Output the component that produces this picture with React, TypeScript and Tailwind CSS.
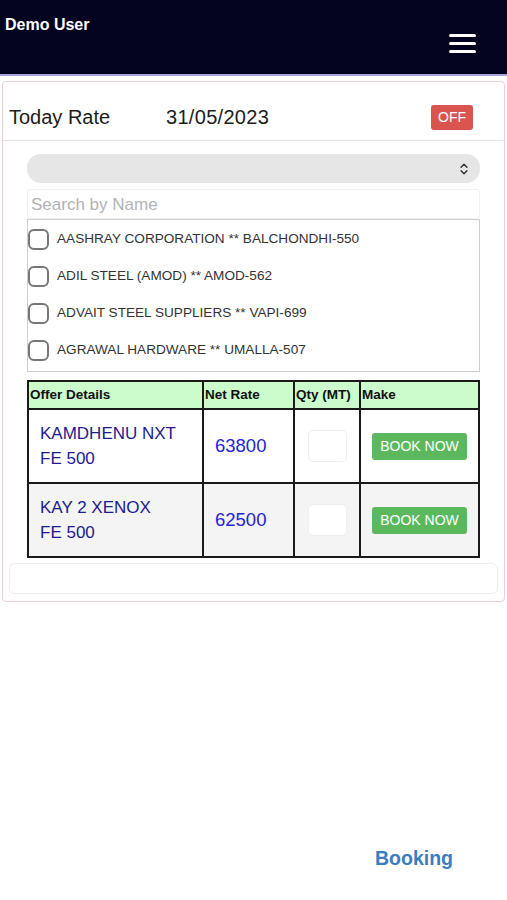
import { ChevronsUpDown } from 'lucide-react';

const parties = [
  'AASHRAY CORPORATION ** BALCHONDHI-550',
  'ADIL STEEL (AMOD) ** AMOD-562',
  'ADVAIT STEEL SUPPLIERS ** VAPI-699',
  'AGRAWAL HARDWARE ** UMALLA-507',
];

const offers = [
  { name: ['KAMDHENU NXT', 'FE 500'], rate: '63800', bg: 'bg-white' },
  { name: ['KAY 2 XENOX', 'FE 500'], rate: '62500', bg: 'bg-[#f4f4f4]' },
];

function Header() {
  return (
    <div className="h-[76px] bg-[#03021f] border-b-2 border-[#a7a6d6] flex items-start justify-between">
      <div className="pl-[5px] pt-[13px] text-[16px] font-bold text-white">Demo User</div>
      <button type="button" className="mr-[31px] mt-[34px] flex flex-col gap-[5.5px]">
        <span className="block w-[27px] h-[2.5px] bg-white rounded" />
        <span className="block w-[27px] h-[2.5px] bg-white rounded" />
        <span className="block w-[27px] h-[2.5px] bg-white rounded" />
      </button>
    </div>
  );
}

function OfferTable() {
  return (
    <table className="mt-2 w-full border-collapse border-2 border-[#1a1a1a] table-fixed">
      <colgroup>
        <col className="w-[175px]" />
        <col className="w-[91px]" />
        <col className="w-[66px]" />
        <col />
      </colgroup>
      <thead>
        <tr className="bg-[#ccfccc] h-[28px] text-[13.5px] font-bold text-[#111]">
          <th className="border-2 border-[#1a1a1a] text-left pl-[1px] font-bold">Offer Details</th>
          <th className="border-2 border-[#1a1a1a] text-left pl-[1px] font-bold">Net Rate</th>
          <th className="border-2 border-[#1a1a1a] text-left pl-[1px] font-bold whitespace-nowrap">Qty (MT)</th>
          <th className="border-2 border-[#1a1a1a] text-left pl-[1px] font-bold">Make</th>
        </tr>
      </thead>
      <tbody>
        {offers.map((o) => (
          <tr key={o.rate} className={`${o.bg} h-[74px]`}>
            <td className="border-2 border-[#1a1a1a] pl-[11px] text-[17px] leading-[25px] text-[#1d1b8f]">
              {o.name[0]}
              <br />
              {o.name[1]}
            </td>
            <td className="border-2 border-[#1a1a1a] pl-[11px] text-[18.5px] text-[#2323d8]">{o.rate}</td>
            <td className="border-2 border-[#1a1a1a]">
              <div className="mx-auto w-[39px] h-[32px] bg-white rounded-[5px] border border-[#efefef]" />
            </td>
            <td className="border-2 border-[#1a1a1a] text-center">
              <button
                type="button"
                className="w-[95px] h-[27px] rounded-[3px] bg-[#5cb85c] text-white text-[14px] leading-none"
              >
                BOOK NOW
              </button>
            </td>
          </tr>
        ))}
      </tbody>
    </table>
  );
}

export default function App() {
  return (
    <div className="min-h-[900px] flex flex-col bg-white font-['Liberation_Sans',Arial,sans-serif]">
      <Header />
      <div className="mx-[2px] mt-[5px] border border-[#f1cdd6] rounded-[4px] pb-[7px]">
        <div className="h-[59px] flex items-center border-b border-[#e6e6e6] pl-[6px] pr-[31px] pt-[12px]">
          <span className="w-[157px] text-[20px] text-[#1c1c1c]">Today Rate</span>
          <span className="flex-1 text-[20px] text-[#1c1c1c] tracking-[0.3px]">31/05/2023</span>
          <button
            type="button"
            className="w-[42px] h-[25px] rounded-[3px] bg-[#d9534f] text-white text-[14px] leading-none"
          >
            OFF
          </button>
        </div>
        <div className="px-[24px] pt-[13px]">
          <div className="h-[29px] rounded-[14px] bg-[#e6e6e6] flex items-center justify-end pr-[9px]">
            <ChevronsUpDown size={14} strokeWidth={2.5} className="text-[#333]" />
          </div>
          <div className="mt-[6px] h-[30px] border border-[#f0f0f0] rounded-[3px] flex items-center px-[3px] pt-[2px] text-[17px] text-[#b3b3b3]">
            Search by Name
          </div>
          <div className="h-[153px] border border-[#cfcfcf] pt-[1px]">
            {parties.map((p) => (
              <div key={p} className="h-[37px] flex items-center">
                <span className="w-[21px] h-[21px] rounded-[6px] border-2 border-[#777] shrink-0" />
                <span className="ml-[8px] text-[13.6px] text-[#333] whitespace-nowrap">{p}</span>
              </div>
            ))}
          </div>
          <OfferTable />
        </div>
        <div className="mx-[6px] mt-[5px] h-[31px] border border-[#ececec] rounded-[6px]" />
      </div>
      <div className="flex-1" />
      <div className="flex justify-end pr-[54px] pb-[27px]">
        <span className="text-[19.5px] font-bold text-[#3a7dbf]">Booking</span>
      </div>
    </div>
  );
}
